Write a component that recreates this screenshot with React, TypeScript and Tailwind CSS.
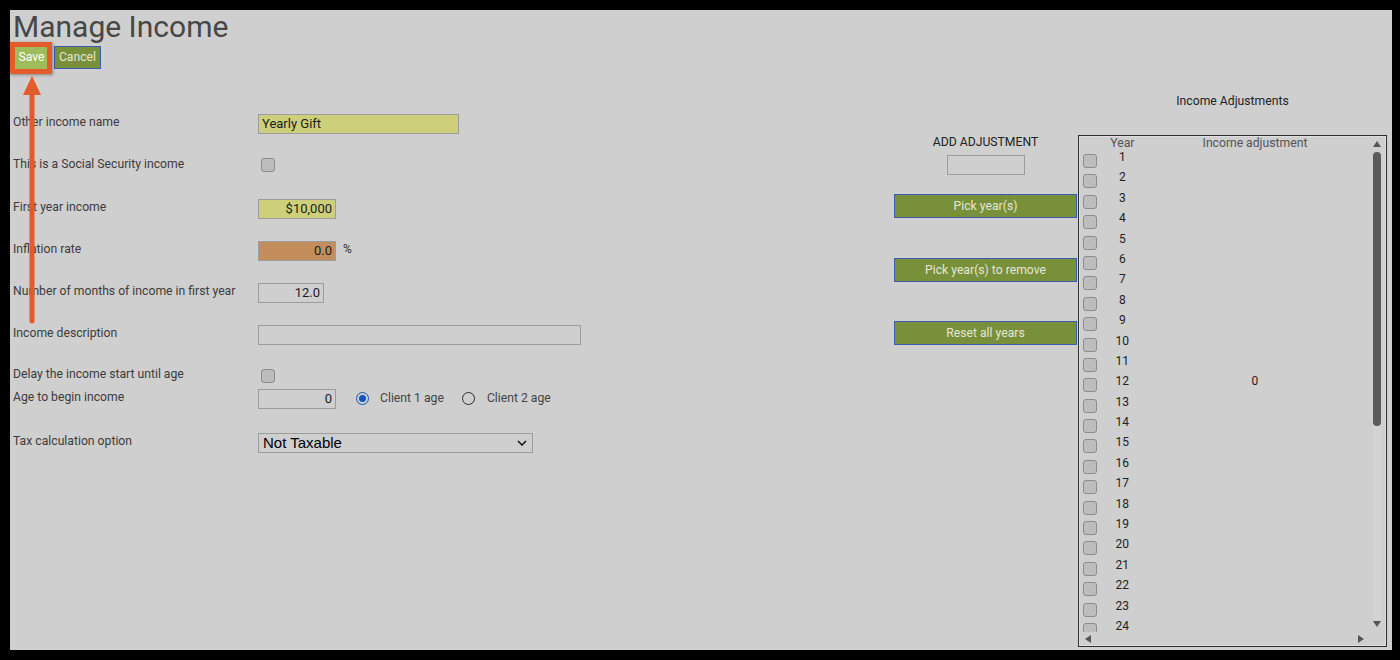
import React from "react";

const font = { fontFamily: "Roboto, 'Liberation Sans', sans-serif" };

function Checkbox() {
  return (
    <div className="w-[14px] h-[14px] rounded-[3px] border border-[#8c8c8c] bg-[#bdbdbd]" />
  );
}

function TextBox({
  value,
  width,
  bg,
  align = "right",
}: {
  value?: string;
  width: string;
  bg: string;
  align?: "left" | "right";
}) {
  return (
    <div
      className={`${width} ${bg} h-[20px] border border-[#9c9c9c] text-[13px] leading-[18px] text-[#1c1c1c] px-[3px] ${
        align === "right" ? "text-right" : "text-left"
      }`}
    >
      {value}
    </div>
  );
}

function Radio({ checked }: { checked: boolean }) {
  return checked ? (
    <div className="w-[13px] h-[13px] rounded-full border-[1.5px] border-[#1456b8] flex items-center justify-center">
      <div className="w-[7px] h-[7px] rounded-full bg-[#1456b8]" />
    </div>
  ) : (
    <div className="w-[13px] h-[13px] rounded-full border border-[#2c2c2c]" />
  );
}

function OliveButton({ label }: { label: string }) {
  return (
    <div className="w-[183px] h-[24px] bg-[#78903a] border border-[#3e5cb4] text-[#e4e6d6] text-[12.2px] leading-[22px] text-center">
      {label}
    </div>
  );
}

function FormRow({
  label,
  height,
  labelTop = 0,
  children,
}: {
  label: string;
  height: string;
  labelTop?: number;
  children: React.ReactNode;
}) {
  return (
    <div className={`flex items-start ${height}`}>
      <div
        className="w-[245px] text-[12.2px] leading-[16px] text-[#3c3c3c]"
        style={{ marginTop: labelTop }}
      >
        {label}
      </div>
      <div className="flex items-center">{children}</div>
    </div>
  );
}

export default function App() {
  const years = Array.from({ length: 24 }, (_, i) => i + 1);

  return (
    <div className="w-[1400px] h-[660px] bg-black pt-[10px] pl-[10px] pr-[8px] pb-[10px]" style={font}>
      <div className="relative w-full h-full bg-[#cfcfcf] pl-[3px] pt-[1px]">
        <h1 className="text-[30px] leading-[31px] text-[#474747]">Manage Income</h1>

        <div className="flex gap-[4px] mt-[4px] h-[23px]">
          <div className="w-[37px] h-[23px] bg-[#9dbd5b] text-white text-[12.2px] leading-[23px] text-center">
            Save
          </div>
          <div className="w-[47px] h-[23px] bg-[#78903a] border border-[#3e5cb4] text-[#e4e6d6] text-[12.2px] leading-[21px] text-center">
            Cancel
          </div>
        </div>

        <div className="flex mt-[17px]">
          {/* left form */}
          <div className="w-[881px] pt-[28px]">
            <FormRow label="Other income name" height="h-[42px]">
              <TextBox value="Yearly Gift" width="w-[201px]" bg="bg-[#cdcf7a]" align="left" />
            </FormRow>
            <FormRow label="This is a Social Security income" height="h-[43px]">
              <div className="pl-[3px] pt-[2px]">
                <Checkbox />
              </div>
            </FormRow>
            <FormRow label="First year income" height="h-[42px]">
              <TextBox value="$10,000" width="w-[78px]" bg="bg-[#cdcf7a]" />
            </FormRow>
            <FormRow label="Inflation rate" height="h-[42px]">
              <TextBox value="0.0" width="w-[78px]" bg="bg-[#c38e5c]" />
              <span className="ml-[7px] -mt-[5px] text-[12px] text-[#333]">%</span>
            </FormRow>
            <FormRow label="Number of months of income in first year" height="h-[42px]">
              <TextBox value="12.0" width="w-[66px]" bg="bg-transparent" />
            </FormRow>
            <FormRow label="Income description" height="h-[40px]">
              <TextBox width="w-[323px]" bg="bg-transparent" />
            </FormRow>
            <FormRow label="Delay the income start until age" height="h-[24px]" labelTop={1}>
              <div className="pl-[3px] pt-[4px]">
                <Checkbox />
              </div>
            </FormRow>
            <FormRow label="Age to begin income" height="h-[44px]">
              <TextBox value="0" width="w-[78px]" bg="bg-transparent" />
              <div className="ml-[20px] -mt-[2px]">
                <Radio checked />
              </div>
              <span className="ml-[11px] -mt-[2px] text-[12.2px] text-[#444]">Client 1 age</span>
              <div className="ml-[18px] -mt-[2px]">
                <Radio checked={false} />
              </div>
              <span className="ml-[12px] -mt-[2px] text-[12.2px] text-[#444]">Client 2 age</span>
            </FormRow>
            <FormRow label="Tax calculation option" height="h-[24px]">
              <div
                className="w-[275px] h-[20px] border border-[#9c9c9c] flex items-center justify-between pl-[4px] pr-[5px] text-[15px] text-black"
                style={{ fontFamily: "'Liberation Sans', Arial, sans-serif" }}
              >
                <span>Not Taxable</span>
                <svg width="10" height="6" viewBox="0 0 10 6">
                  <path d="M1 1 L5 5 L9 1" fill="none" stroke="#111" strokeWidth="1.5" />
                </svg>
              </div>
            </FormRow>
          </div>

          {/* middle column */}
          <div className="w-[183px] pt-[48px] flex flex-col items-center">
            <div className="text-[12.2px] leading-[16px] text-[#222]">ADD ADJUSTMENT</div>
            <div className="mt-[5px] w-[78px] h-[20px] border border-[#9c9c9c]" />
            <div className="mt-[19px]">
              <OliveButton label="Pick year(s)" />
            </div>
            <div className="mt-[40px]">
              <OliveButton label="Pick year(s) to remove" />
            </div>
            <div className="mt-[39px]">
              <OliveButton label="Reset all years" />
            </div>
          </div>

          {/* right column */}
          <div className="w-[310px] pt-[7px] pl-[1px]">
            <div className="text-center text-[12.2px] leading-[16px] text-[#222]">Income Adjustments</div>
            <div className="mt-[26px] h-[512px] border border-[#2e2e2e]">
              <div className="h-full border border-[#dedede] flex flex-col">
                <div className="flex flex-1 min-h-0">
                  <div className="flex-1 overflow-hidden pl-[3px]">
                    <div className="flex h-[12px] text-[12.2px] leading-[12px] text-[#555]">
                      <div className="w-[21px]" />
                      <div className="w-[38px] text-center">Year</div>
                      <div className="w-[232px] text-center">Income adjustment</div>
                    </div>
                    {years.map((y) => (
                      <div key={y} className="flex h-[20.4px] items-start">
                        <div className="w-[21px] pt-[5px]">
                          <Checkbox />
                        </div>
                        <div className="w-[38px] pt-[2px] text-center text-[12px] leading-[12px] text-[#222]">
                          {y}
                        </div>
                        <div className="w-[232px] pt-[2px] text-center text-[12px] leading-[12px] text-[#222]">
                          {y === 12 ? "0" : ""}
                        </div>
                      </div>
                    ))}
                  </div>
                  <div className="w-[16px] flex flex-col items-center">
                    <svg width="10" height="8" viewBox="0 0 10 8" className="mt-[3px]">
                      <path d="M5 1 L9 7 L1 7 Z" fill="#555" />
                    </svg>
                    <div className="mt-[4px] w-[8px] h-[274px] rounded-full bg-[#5b5b5b]" />
                    <div className="flex-1 w-[8px] bg-[#d3d3d3]" />
                    <svg width="10" height="8" viewBox="0 0 10 8" className="mb-[4px]">
                      <path d="M1 1 L9 1 L5 7 Z" fill="#555" />
                    </svg>
                  </div>
                </div>
                <div className="h-[13px] flex items-center justify-between pl-[4px] pr-[20px]">
                  <svg width="8" height="10" viewBox="0 0 8 10">
                    <path d="M7 1 L7 9 L1 5 Z" fill="#555" />
                  </svg>
                  <svg width="8" height="10" viewBox="0 0 8 10">
                    <path d="M1 1 L7 5 L1 9 Z" fill="#555" />
                  </svg>
                </div>
              </div>
            </div>
          </div>
        </div>

        {/* annotation overlay */}
        <div className="absolute left-0 top-[32px] w-[42px] h-[32px] border-[5px] border-[#e35b2a] shadow-[1px_1px_3px_rgba(0,0,0,0.35)]" />
        <svg
          className="absolute left-[10px] top-[64px]"
          width="24"
          height="252"
          viewBox="0 0 24 252"
        >
          <path d="M12 2 L21 21 L3 21 Z" fill="#e35b2a" />
          <line x1="12" y1="18" x2="12" y2="247" stroke="#e35b2a" strokeWidth="5" strokeLinecap="round" />
        </svg>
      </div>
    </div>
  );
}
